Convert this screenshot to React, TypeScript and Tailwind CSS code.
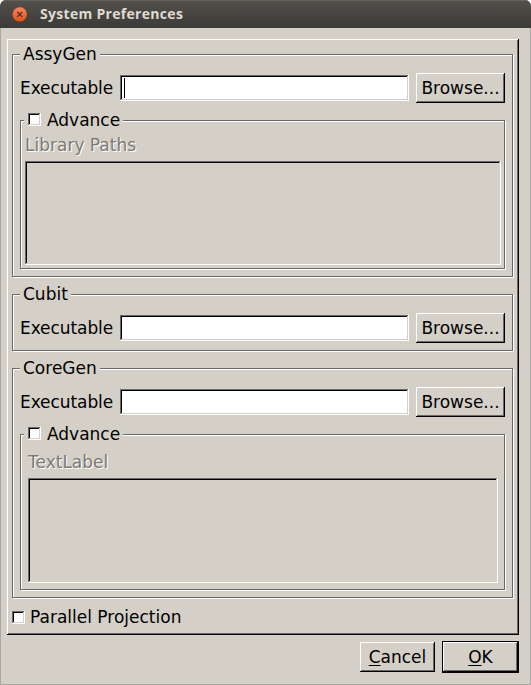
import type { ReactNode } from 'react';

const ETCHED =
  'border border-[#6b6966] shadow-[1px_1px_0_#fff,inset_1px_1px_0_#fff]';
const RAISED =
  'shadow-[inset_-1px_-1px_0_#000,inset_1px_1px_0_#fff,inset_-2px_-2px_0_#6b6966]';
const SUNKEN =
  'shadow-[inset_-1px_-1px_0_#fff,inset_1px_1px_0_#6b6966,inset_-2px_-2px_0_#d4d0c8,inset_2px_2px_0_#000]';

function Group({ title, className, children }: { title: string; className: string; children: ReactNode }) {
  return (
    <section className={`flex w-[501px] flex-col pl-[7px] ${ETCHED} ${className}`}>
      <h2 className="-mt-[12px] h-[22px] shrink-0 self-start bg-[#d4d0c8] pr-[3px] pl-[3px] leading-[22px]">{title}</h2>
      {children}
    </section>
  );
}

function ExecutableRow({ caret = false }: { caret?: boolean }) {
  return (
    <div className="mt-[8px] flex h-[30px] shrink-0 items-center">
      <span className="w-[100px] tracking-[-0.08px]">Executable</span>
      <div className={`flex h-[26px] w-[289px] bg-white pt-[3px] pl-[4px] ${SUNKEN}`}>
        {caret && <span className="h-[20px] w-px bg-black" />}
      </div>
      <button className={`ml-[7px] h-[30px] w-[89px] text-center ${RAISED}`}>Browse...</button>
    </div>
  );
}

function CheckBox() {
  return <span className={`h-[13px] w-[13px] shrink-0 bg-white ${SUNKEN}`} />;
}

function Advance({ className, children }: { className: string; children: ReactNode }) {
  return (
    <section className={`flex w-[485px] shrink-0 flex-col ${ETCHED} ${className}`}>
      <label className="-mt-[12px] ml-[3px] flex h-[22px] shrink-0 items-start self-start bg-[#d4d0c8] pr-[3px] pl-[4px]">
        <span className="flex pt-[4px]">
          <CheckBox />
        </span>
        <span className="ml-[6px]">Advance</span>
      </label>
      {children}
    </section>
  );
}

export default function App() {
  return (
    <div className="h-[685px] w-[531px] overflow-hidden bg-white font-['DejaVu_Sans',sans-serif] text-[17px] leading-[22px] text-black">
      <div className="flex h-full flex-col overflow-hidden rounded-t-[6px] bg-[#d4d0c8]">
        <header className="flex h-[28px] shrink-0 items-center bg-linear-to-b from-[#52514c] to-[#3c3b37] pl-[12px] shadow-[inset_0_1px_0_#63625c]">
          <svg width="16" height="16" viewBox="0 0 16 16">
            <defs>
              <linearGradient id="close" x1="0" y1="0" x2="0" y2="1">
                <stop offset="0" stopColor="#f58861" />
                <stop offset="1" stopColor="#e2501f" />
              </linearGradient>
            </defs>
            <circle cx="7.7" cy="8.4" r="7.6" fill="url(#close)" stroke="#34332f" strokeWidth=".6" />
            <path d="M5.2 5.9l5 5M10.2 5.9l-5 5" stroke="#4a2a1f" strokeWidth="1.3" />
          </svg>
          <h1 className="ml-[12px] font-['Open_Sans',sans-serif] text-[14px] font-bold tracking-[0.3px] text-[#dfdbd2]">
            System Preferences
          </h1>
        </header>

        <main className="flex min-h-0 flex-1 flex-col border-x border-b border-[#aaa7a1] pt-[11px] pl-[6px]">
          <div className={`flex h-[596px] w-[512px] shrink-0 flex-col pt-[15px] pl-[5px] ${RAISED}`}>
            <Group title="AssyGen" className="h-[223px] shrink-0">
              <ExecutableRow caret />
              <Advance className="mt-[17px] h-[149px]">
                <span className="mt-[3px] ml-[4px] h-[22px] text-[#7b7974] [text-shadow:1px_1px_0_#fff]">Library Paths</span>
                <div className={`mt-[5px] ml-[4px] h-[104px] w-[476px] ${SUNKEN}`} />
              </Advance>
            </Group>
            <Group title="Cubit" className="mt-[17px] h-[57px] shrink-0">
              <ExecutableRow />
            </Group>
            <Group title="CoreGen" className="mt-[17px] h-[230px] shrink-0">
              <ExecutableRow />
              <Advance className="mt-[17px] h-[156px]">
                <span className="mt-[6px] ml-[7px] h-[22px] text-[#7b7974] [text-shadow:1px_1px_0_#fff]">TextLabel</span>
                <div className={`mt-[5px] ml-[7px] h-[105px] w-[470px] ${SUNKEN}`} />
              </Advance>
            </Group>
            <label className="mt-[8px] flex h-[22px] items-center">
              <CheckBox />
              <span className="ml-[5px]">Parallel Projection</span>
            </label>
          </div>
          <footer className="mt-[6px] flex items-center pl-[353px]">
            <button className={`h-[30px] w-[75px] ${RAISED}`}>
              <span className="underline decoration-1 underline-offset-2">C</span>ancel
            </button>
            <div className="ml-[7px] h-[32px] w-[77px] bg-black p-px">
              <button className={`h-[30px] w-[75px] bg-[#d4d0c8] ${RAISED}`}>
                <span className="underline decoration-1 underline-offset-2">O</span>K
              </button>
            </div>
          </footer>
        </main>
      </div>
    </div>
  );
}
